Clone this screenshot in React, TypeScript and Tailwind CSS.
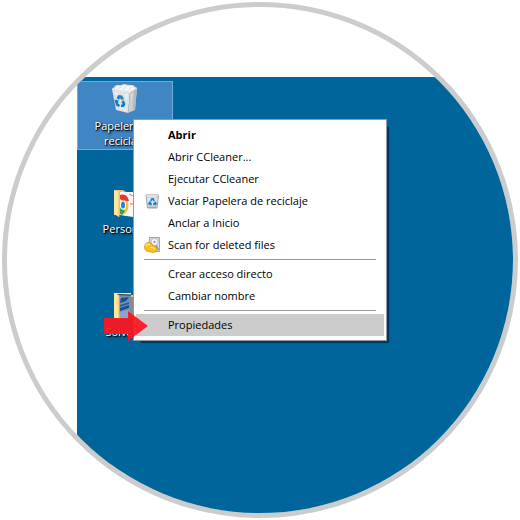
import { useState } from "react";
import type { ReactNode } from "react";
import clsx from "clsx";

type Shortcut = { id: string; label: string; icon: ReactNode };

type MenuEntry = {
  id: string;
  label: string;
  icon?: ReactNode;
  bold?: boolean;
};

function RecycleBinIcon() {
  return (
    <svg viewBox="0 0 32 32" className="mb-0.5 size-8 shrink-0" aria-hidden="true">
      <path d="M3 5 L21 8 L19 29 L7 26 Z" fill="#dfe1e3" />
      <path d="M21 8 L28 4 L26 26 L19 29 Z" fill="#c6cacd" />
      <path d="M25 6 L28 4 L26 26 L24 27 Z" fill="#b2b8bc" />
      <path d="M3 5 L7 1 L12 1 L15 0 L21 1 L24 1 L28 4 L21 8 Z" fill="#d4d8db" />
      <path d="M5 5 L9 1.500 L12 2.500 L15 0.500 L18 2 L22 1.500 L26 4.500 L21 7.500 L14 6.500 Z" fill="#f6f6f6" />
      <path d="M9 4.500 L12 3 M14 5.500 L17 3 M20 6 L22 3" stroke="#cdd1d4" strokeWidth="0.800" />
      <path d="M3 5 L21 8 L28 4" fill="none" stroke="#f0f1f2" strokeWidth="0.800" />
      <path d="M5 8 L10 9 L7 11 Z M15 10 L19 10 L18 17 Z M10 24 L17 23 L18 27 Z" fill="#edeeef" />
      <path d="M22 11 L24 9 L22 20 Z M21 22 L23 20 L20 27 Z" fill="#dcdfe1" />
      <path d="M7.500 14 L9.500 11 L13 11.500 L15 15 L12.500 16 L11 14 L10 16 Z" fill="#1686cf" />
      <path d="M5.500 15.500 L9.500 16.500 L9 19.500 L11 21 L10 23 L7 21.500 Z" fill="#0f7cc6" />
      <path d="M14.500 16 L16.500 20 L15 23 L12 23 L12 21 L13.500 20 L12.500 18 Z" fill="#0f7cc6" />
    </svg>
  );
}

function FolderIcon({ children }: { children: ReactNode }) {
  return (
    <svg viewBox="0 0 32 32" className="mb-0.5 size-8 shrink-0" aria-hidden="true">
      <path d="M5 3 H14 L17 5 H28 V28 H5 Z" fill="#e9c46c" />
      {children}
      <path d="M5 3 L10 5 V30 L5 27 Z" fill="#ffe59b" />
      <path d="M9.500 5 L10.500 5.500 V30 L9.500 29.500 Z" fill="#e6bd64" />
    </svg>
  );
}

function PersonalIcon() {
  return (
    <FolderIcon>
      <path d="M11 5 H24 V30 L11 28 Z" fill="#fafafa" />
      <path d="M11 8 Q18 6 20 14 L15 15 L11 12 Z" fill="#e23b36" />
      <path d="M15 13 Q21 14 19 22 Q17 27 13 28 L16 20 Z" fill="#f6c12b" />
      <path d="M11 20 L16 24 L13 28 L11 27 Z" fill="#2da64f" />
      <ellipse cx="14" cy="18" rx="3" ry="4.500" fill="#fff" />
      <ellipse cx="14" cy="18" rx="2" ry="3.500" fill="#2f7de1" />
      <path d="M20 7 L24 9 M21 17 H24" stroke="#e06a62" strokeWidth="1" />
    </FolderIcon>
  );
}

function SolveticIcon() {
  return (
    <FolderIcon>
      <path d="M5 3 H22 V6 H5 Z" fill="#ffe59b" />
      <path d="M8 5 H22 V29 H11 Z" fill="#6d8fbe" />
      <path d="M7 4.500 L22 5" stroke="#252a30" strokeWidth="1" />
      <path d="M12 8 L20 7 L17 11 L11 13 Z M11 18 L20 15 L20 18 L11 21 Z" fill="#1f4f86" />
      <path d="M11 15 L20 12 V14 L11 17 Z" fill="#2d609a" />
      <path d="M11 22 L20 19 V29 H11 Z" fill="#8aa4cb" />
      <path d="M21 7 H27 V29 H21 Z" fill="#858b91" />
    </FolderIcon>
  );
}

function EmptyBinIcon() {
  return (
    <svg viewBox="0 0 16 16" className="size-4" aria-hidden="true">
      <path d="M2 2 H14.500 L13 15 H3.500 Z" fill="#dfe3e6" stroke="#9da3a8" strokeWidth="1" />
      <path d="M2 2 H14.500 L14 4 H2.500 Z" fill="#f3f4f5" stroke="#a9afb4" strokeWidth="0.500" />
      <path d="M4 13.500 H12.500 L12.300 15 H4.200 Z" fill="#a4abb0" />
      <path d="M6 7.500 L7.500 5 H9.500 L11 7.500 L9.300 8.200 L8.500 6.800 L7.600 8.200 Z" fill="#1685d2" />
      <path d="M5.500 8.300 L7.500 8.800 L6.800 10 H7.800 V12.300 H5 L4 10.500 Z" fill="#1685d2" />
      <path d="M11.300 8.300 L13 10.500 L12 12.300 H9.200 V10 H10.500 L9.800 9 Z" fill="#1685d2" />
    </svg>
  );
}

function ScanDiskIcon() {
  return (
    <svg viewBox="0 0 16 16" className="size-4" aria-hidden="true">
      <path d="M5.500 0.500 H15.500 V14.500 H11 L5 8 Z" fill="#d9dcdf" stroke="#8d9297" strokeWidth="0.800" />
      <circle cx="10.500" cy="5" r="3.600" fill="#f7f7f7" stroke="#a3a8ac" strokeWidth="0.700" />
      <circle cx="10.500" cy="5" r="1.200" fill="#989ea3" />
      <path d="M12 8 L14.500 13" stroke="#777d83" strokeWidth="1" />
      <path
        d="M0.500 9.500 Q1.500 5 5.500 5.500 Q8 5.500 8.500 8 L12.500 10.500 Q14.500 13 12 15 Q8 16 5 14.500 Q0.500 14.500 0.500 9.500 Z"
        fill="#fbc01c"
        stroke="#c97b08"
        strokeWidth="0.600"
      />
      <path d="M2 9 Q3.500 6.500 6 7.500 M6 11 Q8 9.500 11 12" fill="none" stroke="#ffe87a" strokeWidth="1.300" />
    </svg>
  );
}

const shortcuts: Shortcut[] = [
  { id: "bin", label: "Papelera de reciclaje", icon: <RecycleBinIcon /> },
  { id: "personal", label: "Personal", icon: <PersonalIcon /> },
  { id: "solvetic", label: "Solvetic", icon: <SolveticIcon /> },
];

const menuGroups: MenuEntry[][] = [
  [
    { id: "open", label: "Abrir", bold: true },
    { id: "open-cc", label: "Abrir CCleaner..." },
    { id: "run-cc", label: "Ejecutar CCleaner" },
    { id: "empty", label: "Vaciar Papelera de reciclaje", icon: <EmptyBinIcon /> },
    { id: "pin", label: "Anclar a Inicio" },
    { id: "scan", label: "Scan for deleted files", icon: <ScanDiskIcon /> },
  ],
  [
    { id: "shortcut", label: "Crear acceso directo" },
    { id: "rename", label: "Cambiar nombre" },
  ],
  [{ id: "properties", label: "Propiedades" }],
];

function ContextMenu() {
  const [active, setActive] = useState("properties");

  return (
    <div
      role="menu"
      className="absolute left-14 top-[42px] w-[254px] border border-[#999] bg-white px-0.5 py-1 shadow-[5px_5px_1px_-3px_#003862]"
    >
      {menuGroups.map((group, i) => (
        <div key={group[0].id}>
          {i > 0 && <hr className="mx-2 my-[3px] border-t border-[#999]" />}
          {group.map((entry) => (
            <button
              key={entry.id}
              type="button"
              role="menuitem"
              onMouseEnter={() => setActive(entry.id)}
              className={clsx(
                "flex h-[22px] w-full items-center gap-2 px-2 text-left text-[11px] whitespace-nowrap text-black",
                active === entry.id && "bg-[#ccc]",
                entry.bold && "font-bold"
              )}
            >
              <span className="size-4 shrink-0">{entry.icon}</span>
              {entry.label}
            </button>
          ))}
        </div>
      ))}
    </div>
  );
}

export default function App() {
  const [selected, setSelected] = useState("bin");

  return (
    <main className="bg-white p-0.5 font-['Open_Sans','Noto_Sans',sans-serif]">
      <div className="flex aspect-square w-full overflow-hidden rounded-full border-5 border-[#ccc] pt-[70px] pl-[70px]">
        <div className="relative flex-1 bg-[#00659b] pt-1">
          <div className="flex w-24 flex-col gap-[34px]">
            {shortcuts.map((s) => (
              <button
                key={s.id}
                type="button"
                onClick={() => setSelected(s.id)}
                className={clsx(
                  "flex h-[69px] flex-col items-center border px-3 pt-0.5 text-[11px] leading-[15px] text-white [text-shadow:1px_1px_1px_#000,1px_1px_3px_#000]",
                  selected === s.id ? "border-[#76a8da] bg-[#4086c3]" : "border-transparent"
                )}
              >
                {s.icon}
                {s.label}
              </button>
            ))}
          </div>
          <ContextMenu />
          <svg
            viewBox="0 0 44 30"
            className="pointer-events-none absolute left-[27px] top-[234px] h-[30px] w-11"
            aria-hidden="true"
          >
            <path d="M0 7 H24 V0 L44 15 L24 30 V23 H0 Z" fill="#ff1420" opacity="0.92" />
          </svg>
        </div>
      </div>
    </main>
  );
}
